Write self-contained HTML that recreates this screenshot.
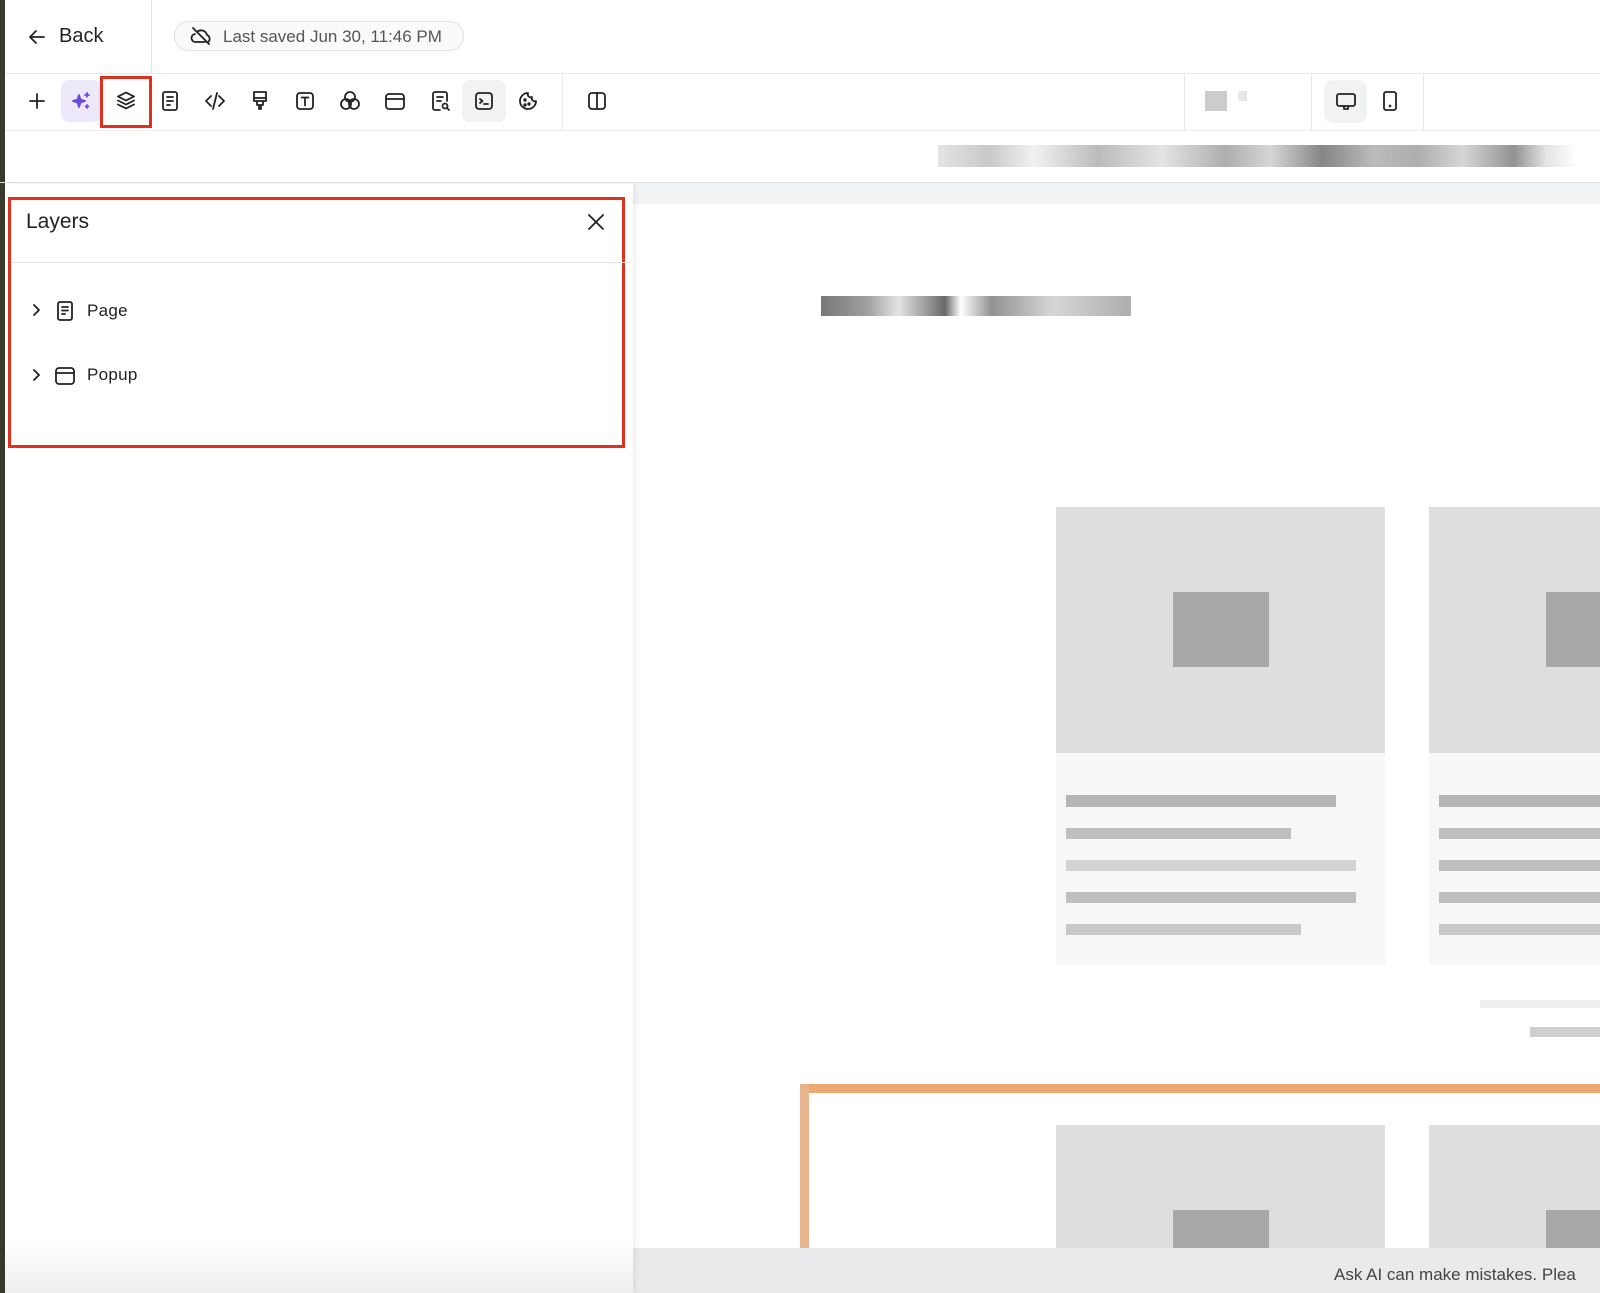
<!DOCTYPE html>
<html><head><meta charset="utf-8"><style>
*{box-sizing:border-box;margin:0;padding:0}
body{width:1600px;height:1293px;overflow:hidden;background:#fff;font-family:"Liberation Sans",sans-serif;color:#1f2328;position:relative}
.abs{position:absolute}
svg{fill:none;stroke:#222;stroke-width:1.8;stroke-linecap:round;stroke-linejoin:round}
.ic{position:absolute;top:89px;width:24px;height:24px}
.px{position:absolute;background:#9a9a9a}
</style></head><body>
<div class="abs" style="left:0;top:0;width:5px;height:1293px;background:#3a3a2c"></div>
<svg class="abs" style="left:27px;top:27px" width="20" height="20" viewBox="0 0 20 20"><path d="M17 10H3M9 4l-6 6 6 6"/></svg>
<div class="abs" style="left:59px;top:25px;font-size:20px">Back</div>
<div class="abs" style="left:151px;top:0;width:1px;height:74px;background:#e6e6e6"></div>
<div class="abs" style="left:174px;top:21px;width:290px;height:30px;border:1px solid #e0e0e0;border-radius:15px;background:#fafafa"></div>
<svg class="abs" style="left:190px;top:26px" width="22" height="20" viewBox="0 0 22 20" stroke="#555"><path d="M7 6a6 6 0 0 1 10 3 4 4 0 0 1 1 7M15 16H6a4 4 0 0 1-1-8M3 2l16 16"/></svg>
<div class="abs" style="left:223px;top:27px;font-size:17px;color:#555">Last saved Jun 30, 11:46 PM</div>
<div class="abs" style="left:5px;top:73px;width:1595px;height:1px;background:#e8e8e8"></div>
<div class="abs" style="left:61px;top:80px;width:40px;height:42px;background:#ede9fb;border-radius:8px"></div>
<div class="abs" style="left:462px;top:80px;width:44px;height:42px;background:#f1f2f4;border-radius:8px"></div>
<div class="abs" style="left:100px;top:76px;width:52px;height:52px;border:3px solid #e0301e"></div>
<svg class="ic" style="left:25px" viewBox="0 0 24 24"><path d="M12 5v14M5 12h14"/></svg>
<svg class="ic" style="left:70px" viewBox="0 0 24 24"><path d="M9 6l1.5 4.5L15 12l-4.5 1.5L9 18l-1.5-4.5L3 12l4.5-1.5z" fill="#6d4ae0" stroke="#6d4ae0"/><path d="M17 4v4M15 6h4M17 16v3M15.5 17.5h3" stroke="#6d4ae0"/></svg>
<svg class="ic" style="left:114px" viewBox="0 0 24 24" stroke-width="2"><path d="M12 3.5l8 4-8 4-8-4z"/><path d="M4 11.5l8 4 8-4M4 15.5l8 4 8-4"/></svg>
<svg class="ic" style="left:158px" viewBox="0 0 24 24"><rect x="5" y="3" width="14" height="18" rx="2"/><path d="M9 8h6M9 12h6M9 16h3"/></svg>
<svg class="ic" style="left:203px" viewBox="0 0 24 24"><path d="M8 7l-5 5 5 5M16 7l5 5-5 5M14 4l-4 16"/></svg>
<svg class="ic" style="left:248px" viewBox="0 0 24 24"><path d="M6 3h12v9H6zM6 9h12M9 12v4h6v-4M11 16v4h2v-4"/></svg>
<svg class="ic" style="left:293px" viewBox="0 0 24 24"><rect x="4" y="4" width="16" height="16" rx="3"/><path d="M8.5 8.5h7M12 8.5v8"/></svg>
<svg class="ic" style="left:338px" viewBox="0 0 24 24"><circle cx="12" cy="8" r="5"/><circle cx="8" cy="15" r="5"/><circle cx="16" cy="15" r="5"/></svg>
<svg class="ic" style="left:383px" viewBox="0 0 24 24"><rect x="3" y="5" width="18" height="15" rx="3"/><path d="M3 10h18"/></svg>
<svg class="ic" style="left:428px" viewBox="0 0 24 24"><path d="M12 21H7a2 2 0 0 1-2-2V5a2 2 0 0 1 2-2h10a2 2 0 0 1 2 2v7M9 8h6M9 12h4"/><circle cx="17" cy="17" r="2.5"/><path d="M19 19l2 2"/></svg>
<svg class="ic" style="left:472px" viewBox="0 0 24 24"><rect x="4" y="4" width="16" height="16" rx="3"/><path d="M8 10l2.5 2L8 14M12 15h4"/></svg>
<svg class="ic" style="left:516px" viewBox="0 0 24 24" stroke-width="1.3"><path d="M12 4a8 8 0 1 0 8 8 3 3 0 0 1-4-4 3 3 0 0 1-4-4z"/><circle cx="9" cy="11" r=".8"/><circle cx="13" cy="15" r=".8"/><circle cx="9" cy="16" r=".8"/></svg>
<div class="abs" style="left:562px;top:74px;width:1px;height:57px;background:#e8e8e8"></div>
<svg class="ic" style="left:585px" viewBox="0 0 24 24"><rect x="4" y="4" width="16" height="16" rx="3"/><path d="M12 4v16"/></svg>
<div class="abs" style="left:1184px;top:74px;width:1px;height:57px;background:#e8e8e8"></div>
<div class="px" style="left:1205px;top:91px;width:22px;height:20px;background:#ccc"></div>
<div class="px" style="left:1238px;top:91px;width:9px;height:10px;background:#e6e6e6"></div>
<div class="abs" style="left:1311px;top:74px;width:1px;height:57px;background:#e8e8e8"></div>
<div class="abs" style="left:1324px;top:80px;width:43px;height:43px;background:#f1f2f4;border-radius:9px"></div>
<svg class="ic" style="left:1334px" viewBox="0 0 24 24"><rect x="3" y="5" width="18" height="12" rx="2"/><path d="M10 17v3h4v-3"/></svg>
<svg class="ic" style="left:1378px" viewBox="0 0 24 24"><rect x="6" y="3" width="12" height="18" rx="2"/><circle cx="12" cy="17" r=".5"/></svg>
<div class="abs" style="left:1423px;top:74px;width:1px;height:57px;background:#e8e8e8"></div>
<div class="abs" style="left:5px;top:130px;width:1595px;height:1px;background:#ececec"></div>
<div class="abs" style="left:938px;top:145px;width:640px;height:22px;background:linear-gradient(90deg,#ddd 0,#bbb 8%,#eee 15%,#aaa 25%,#ddd 35%,#999 45%,#ccc 52%,#666 60%,#aaa 68%,#999 75%,#ccc 82%,#777 90%,#ddd 95%,#fff 100%);opacity:.8"></div>
<div class="abs" style="left:633px;top:183px;width:967px;height:21px;background:#f2f3f4"></div>
<div class="abs" style="left:0;top:182px;width:1600px;height:1px;background:#e4e4e4"></div>
<div class="px" style="left:821px;top:296px;width:310px;height:20px;background:linear-gradient(90deg,#555 0,#888 15%,#ddd 25%,#444 40%,#fff 45%,#777 55%,#ccc 75%,#999 100%);opacity:.8"></div>
<div class="abs" style="left:1056px;top:507px;width:329px;height:246px;background:#dedede"></div>
<div class="abs" style="left:1173px;top:592px;width:96px;height:75px;background:#a8a8a8"></div>
<div class="abs" style="left:1056px;top:753px;width:329px;height:212px;background:#f6f8f8"></div>
<div class="abs" style="left:1429px;top:507px;width:171px;height:246px;background:#dedede"></div>
<div class="abs" style="left:1546px;top:592px;width:54px;height:75px;background:#a8a8a8"></div>
<div class="abs" style="left:1429px;top:753px;width:171px;height:212px;background:#f6f8f8"></div>
<div class="px" style="left:1066px;top:795px;width:270px;height:12px;background:#888;opacity:.6"></div>
<div class="px" style="left:1066px;top:828px;width:225px;height:11px;background:#999;opacity:.6"></div>
<div class="px" style="left:1066px;top:860px;width:290px;height:11px;background:#bbb;opacity:.6"></div>
<div class="px" style="left:1066px;top:892px;width:290px;height:11px;background:#999;opacity:.6"></div>
<div class="px" style="left:1066px;top:924px;width:235px;height:11px;background:#aaa;opacity:.6"></div>
<div class="px" style="left:1439px;top:795px;width:161px;height:12px;background:#888;opacity:.6"></div>
<div class="px" style="left:1439px;top:828px;width:161px;height:11px;background:#999;opacity:.6"></div>
<div class="px" style="left:1439px;top:860px;width:161px;height:11px;background:#999;opacity:.6"></div>
<div class="px" style="left:1439px;top:892px;width:161px;height:11px;background:#999;opacity:.6"></div>
<div class="px" style="left:1439px;top:924px;width:161px;height:11px;background:#aaa;opacity:.6"></div>
<div class="px" style="left:1480px;top:1000px;width:120px;height:8px;background:#eee"></div>
<div class="px" style="left:1530px;top:1027px;width:70px;height:10px;background:#bbb;opacity:.7"></div>
<div class="abs" style="left:800px;top:1084px;width:800px;height:9px;background:#efa772"></div>
<div class="abs" style="left:800px;top:1084px;width:9px;height:164px;background:#e8b58f"></div>
<div class="abs" style="left:1056px;top:1125px;width:329px;height:123px;background:#dedede"></div>
<div class="abs" style="left:1173px;top:1210px;width:96px;height:38px;background:#a8a8a8"></div>
<div class="abs" style="left:1429px;top:1125px;width:171px;height:123px;background:#dedede"></div>
<div class="abs" style="left:1546px;top:1210px;width:54px;height:38px;background:#a8a8a8"></div>
<div class="abs" style="left:633px;top:1248px;width:967px;height:45px;background:#e9eaeb"></div>
<div class="abs" style="left:1334px;top:1265px;font-size:17px;color:#444;white-space:nowrap">Ask AI can make mistakes. Plea</div>
<div class="abs" style="left:5px;top:184px;width:628px;height:1109px;background:#fff;box-shadow:2px 0 6px rgba(0,0,0,.08)"></div>
<div class="abs" style="left:5px;top:1240px;width:628px;height:53px;background:linear-gradient(#fff,#eee)"></div>
<div class="abs" style="left:8px;top:197px;width:617px;height:251px;border:3px solid #e0301e"></div>
<div class="abs" style="left:26px;top:210px;font-size:21px;color:#222">Layers</div>
<svg class="abs" style="left:586px;top:212px" width="20" height="20" viewBox="0 0 20 20" stroke-width="2.4"><path d="M3 3l14 14M17 3L3 17"/></svg>
<div class="abs" style="left:11px;top:262px;width:620px;height:1px;background:#e4e4e4"></div>
<svg class="abs" style="left:30px;top:303px" width="12" height="14" viewBox="0 0 12 14" stroke-width="1.3"><path d="M4 2l5 5-5 5"/></svg>
<svg class="abs" style="left:54px;top:300px" width="22" height="22" viewBox="0 0 22 22"><rect x="4" y="2" width="14" height="18" rx="2"/><path d="M8 7h6M8 10.5h6M8 14h3"/></svg>
<div class="abs" style="left:87px;top:301px;font-size:17px;color:#222;letter-spacing:.3px">Page</div>
<svg class="abs" style="left:30px;top:368px" width="12" height="14" viewBox="0 0 12 14" stroke-width="1.3"><path d="M4 2l5 5-5 5"/></svg>
<svg class="abs" style="left:54px;top:365px" width="22" height="22" viewBox="0 0 22 22"><rect x="2" y="3" width="18" height="16" rx="3"/><path d="M2 8h18"/></svg>
<div class="abs" style="left:87px;top:365px;font-size:17px;color:#222;letter-spacing:.3px">Popup</div>
</body></html>
